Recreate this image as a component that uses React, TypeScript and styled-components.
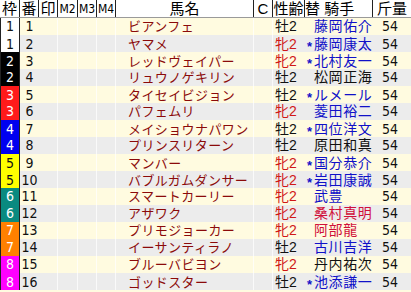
import styled, { createGlobalStyle } from "styled-components";

const GlobalStyle = createGlobalStyle`
  html, body {
    margin: 0;
    padding: 0;
    background: #fffbe0;
  }
  body {
    font-family: "Liberation Sans", "Noto Sans CJK JP", sans-serif;
  }
`;

const COLUMNS = "20px 19px 19px 20px 19px 19px 138px 19px 32px 68px 38px";
const TEXT_FONT = `"Liberation Sans", "Noto Sans CJK JP", sans-serif`;
const DIGIT_FONT = `"DejaVu Sans Condensed", "Liberation Sans", sans-serif`;

const Table = styled.div`
  width: 411px;
  display: flex;
  flex-direction: column;
`;

const HeaderRow = styled.div`
  display: grid;
  grid-template-columns: ${COLUMNS};
  height: 18px;
  background: #ffffff;
  border-bottom: 1px solid #9a9a9a;
  box-sizing: border-box;
`;

const HeaderCell = styled.div<{ $align?: string; $narrow?: boolean }>`
  display: flex;
  align-items: center;
  justify-content: ${(p) => p.$align || "center"};
  border-right: 1px solid #222;
  font-size: ${(p) => (p.$narrow ? "12px" : "15px")};
  font-family: ${(p) => (p.$narrow ? DIGIT_FONT : TEXT_FONT)};
  color: #000;
  line-height: 16px;
  white-space: nowrap;
  &:last-child {
    border-right: none;
  }
`;

const Row = styled.div<{ $even: boolean }>`
  display: grid;
  grid-template-columns: ${COLUMNS};
  height: 17px;
  background: ${(p) => (p.$even ? "#ececec" : "#fffbe0")};
`;

const WakuCell = styled.div<{ $bg: string; $fg: string }>`
  display: flex;
  align-items: center;
  justify-content: center;
  background: ${(p) => p.$bg};
  color: ${(p) => p.$fg};
  border-left: 1px solid #222;
  border-right: 1px solid #222;
  font-size: 14px;
  font-family: ${DIGIT_FONT};
  line-height: 15px;
  box-sizing: border-box;
`;

const NumCell = styled.div`
  display: flex;
  align-items: center;
  justify-content: center;
  font-size: 14px;
  font-family: ${DIGIT_FONT};
  color: #111;
  line-height: 15px;
`;

const BlankCell = styled.div`
  border-right: 1px solid rgba(255, 255, 255, 0.75);
`;

const NameCell = styled.div`
  display: flex;
  align-items: center;
  padding-left: 12px;
  font-size: 13px;
  font-family: ${TEXT_FONT};
  letter-spacing: 0.4px;
  color: #8b0a0a;
  white-space: nowrap;
  border-right: 1px solid rgba(255, 255, 255, 0.75);
  line-height: 15px;
`;

const SexCell = styled.div<{ $female: boolean }>`
  display: flex;
  align-items: center;
  padding-left: 2px;
  font-size: 14px;
  font-family: ${TEXT_FONT};
  color: ${(p) => (p.$female ? "#d01818" : "#111")};
  line-height: 15px;
  white-space: nowrap;
`;

const JockeyCell = styled.div<{ $color: string }>`
  display: flex;
  align-items: center;
  padding-left: 2px;
  font-size: 14px;
  font-family: ${TEXT_FONT};
  letter-spacing: 0.6px;
  color: ${(p) => p.$color};
  line-height: 15px;
  white-space: nowrap;
`;

const Mark = styled.span`
  display: inline-block;
  width: 7px;
  margin-top: 6px;
  font-size: 13px;
  font-weight: 700;
  line-height: 12px;
  letter-spacing: 0;
`;

const WeightCell = styled.div`
  display: flex;
  align-items: center;
  padding-left: 9px;
  font-size: 14px;
  font-family: ${DIGIT_FONT};
  color: #111;
  line-height: 15px;
`;

const WAKU: Record<number, { bg: string; fg: string }> = {
  1: { bg: "#ffffff", fg: "#111" },
  2: { bg: "#000000", fg: "#fff" },
  3: { bg: "#ff1a1a", fg: "#fff" },
  4: { bg: "#0000f0", fg: "#fff" },
  5: { bg: "#ffff00", fg: "#111" },
  6: { bg: "#0a8a80", fg: "#fff" },
  7: { bg: "#ff8000", fg: "#fff" },
  8: { bg: "#ff00ff", fg: "#fff" },
};

const BLUE = "#1010c8";
const RED = "#d0103a";
const BLACK = "#111";

const horses = [
  { waku: 1, no: 1, name: "ビアンフェ", female: false, mark: false, jockey: "藤岡佑介", color: BLUE },
  { waku: 1, no: 2, name: "ヤマメ", female: true, mark: true, jockey: "藤岡康太", color: BLUE },
  { waku: 2, no: 3, name: "レッドヴェイパー", female: true, mark: true, jockey: "北村友一", color: BLUE },
  { waku: 2, no: 4, name: "リュウノゲキリン", female: false, mark: false, jockey: "松岡正海", color: BLACK },
  { waku: 3, no: 5, name: "タイセイビジョン", female: false, mark: true, jockey: "ルメール", color: BLUE },
  { waku: 3, no: 6, name: "パフェムリ", female: true, mark: false, jockey: "菱田裕二", color: BLUE },
  { waku: 4, no: 7, name: "メイショウナパワン", female: false, mark: true, jockey: "四位洋文", color: BLUE },
  { waku: 4, no: 8, name: "プリンスリターン", female: false, mark: false, jockey: "原田和真", color: BLACK },
  { waku: 5, no: 9, name: "マンバー", female: true, mark: true, jockey: "国分恭介", color: BLUE },
  { waku: 5, no: 10, name: "バブルガムダンサー", female: true, mark: true, jockey: "岩田康誠", color: BLUE },
  { waku: 6, no: 11, name: "スマートカーリー", female: true, mark: false, jockey: "武豊", color: BLUE },
  { waku: 6, no: 12, name: "アザワク", female: true, mark: false, jockey: "桑村真明", color: RED },
  { waku: 7, no: 13, name: "プリモジョーカー", female: true, mark: false, jockey: "阿部龍", color: RED },
  { waku: 7, no: 14, name: "イーサンティラノ", female: false, mark: false, jockey: "古川吉洋", color: BLUE },
  { waku: 8, no: 15, name: "ブルーバビヨン", female: true, mark: false, jockey: "丹内祐次", color: BLACK },
  { waku: 8, no: 16, name: "ゴッドスター", female: false, mark: true, jockey: "池添謙一", color: BLUE },
];

export default function App() {
  return (
    <>
      <GlobalStyle />
      <Table>
        <HeaderRow>
          <HeaderCell>枠</HeaderCell>
          <HeaderCell>番</HeaderCell>
          <HeaderCell>印</HeaderCell>
          <HeaderCell $narrow>M2</HeaderCell>
          <HeaderCell $narrow>M3</HeaderCell>
          <HeaderCell $narrow>M4</HeaderCell>
          <HeaderCell>馬名</HeaderCell>
          <HeaderCell>C</HeaderCell>
          <HeaderCell>性齢</HeaderCell>
          <HeaderCell $align="flex-start">替&nbsp;騎手</HeaderCell>
          <HeaderCell>斤量</HeaderCell>
        </HeaderRow>
        {horses.map((h, i) => (
          <Row key={h.no} $even={i % 2 === 1}>
            <WakuCell $bg={WAKU[h.waku].bg} $fg={WAKU[h.waku].fg}>
              {h.waku}
            </WakuCell>
            <NumCell>{h.no}</NumCell>
            <BlankCell />
            <BlankCell />
            <BlankCell />
            <BlankCell />
            <NameCell>{h.name}</NameCell>
            <BlankCell />
            <SexCell $female={h.female}>{h.female ? "牝2" : "牡2"}</SexCell>
            <JockeyCell $color={h.color}>
              <Mark>{h.mark ? "*" : ""}</Mark>
              {h.jockey}
            </JockeyCell>
            <WeightCell>54</WeightCell>
          </Row>
        ))}
      </Table>
    </>
  );
}
